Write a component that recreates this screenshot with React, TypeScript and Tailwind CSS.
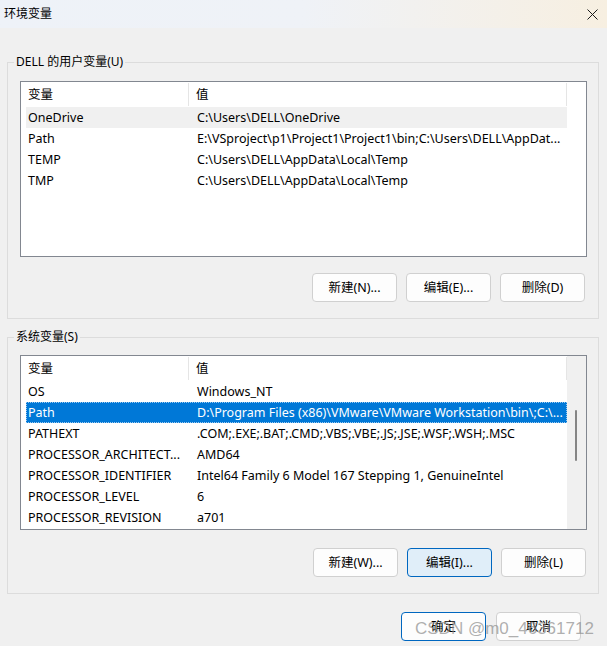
import React from "react";

const FONT = "font-['Noto_Sans','Noto_Sans_CJK_SC',sans-serif]";

type Row = { name: string; value: string };

const userVars: Row[] = [
  { name: "OneDrive", value: "C:\\Users\\DELL\\OneDrive" },
  { name: "Path", value: "E:\\VSproject\\p1\\Project1\\Project1\\bin;C:\\Users\\DELL\\AppDat..." },
  { name: "TEMP", value: "C:\\Users\\DELL\\AppData\\Local\\Temp" },
  { name: "TMP", value: "C:\\Users\\DELL\\AppData\\Local\\Temp" },
];

const sysVars: Row[] = [
  { name: "OS", value: "Windows_NT" },
  { name: "Path", value: "D:\\Program Files (x86)\\VMware\\VMware Workstation\\bin\\;C:\\..." },
  { name: "PATHEXT", value: ".COM;.EXE;.BAT;.CMD;.VBS;.VBE;.JS;.JSE;.WSF;.WSH;.MSC" },
  { name: "PROCESSOR_ARCHITECT...", value: "AMD64" },
  { name: "PROCESSOR_IDENTIFIER", value: "Intel64 Family 6 Model 167 Stepping 1, GenuineIntel" },
  { name: "PROCESSOR_LEVEL", value: "6" },
  { name: "PROCESSOR_REVISION", value: "a701" },
];

function Header() {
  return (
    <div className="flex h-[25px] shrink-0 bg-white">
      <div className="my-[1px] flex w-[168px] items-center border-r border-[#e5e5e5] pl-[7px]">变量</div>
      <div className="my-[1px] flex w-[378px] items-center border-r border-[#e5e5e5] pl-[7px]">值</div>
    </div>
  );
}

function ListRow({ row, variant }: { row: Row; variant?: "hover" | "selected" }) {
  const bg =
    variant === "hover"
      ? "bg-[#f0f0f0] text-black"
      : variant === "selected"
      ? "bg-[#0078d7] text-white outline outline-1 outline-dotted outline-[#9ccaf0] -outline-offset-1"
      : "text-black";
  return (
    <div className={`ml-[5px] flex h-[21px] w-[541px] items-center whitespace-nowrap ${bg}`}>
      <div className="w-[163px] overflow-hidden pl-[2px]">{row.name}</div>
      <div className="w-[378px] overflow-hidden pl-[8px]">{row.value}</div>
    </div>
  );
}

function Button({ label, variant }: { label: string; variant?: "focus" | "default" }) {
  const cls =
    variant === "focus"
      ? "bg-[#e0eef9] border-[#0067c0]"
      : variant === "default"
      ? "bg-[#fdfdfd] border-[#0067c0]"
      : "bg-[#fdfdfd] border-[#d0d0d0]";
  return (
    <div className={`flex h-[29px] w-[85px] items-center justify-center rounded-[4px] border ${cls} text-black`}>
      {label}
    </div>
  );
}

export default function App() {
  return (
    <div className={`relative flex h-[646px] w-[607px] flex-col overflow-hidden bg-[#f0f0f0] text-[12.5px] leading-[16px] text-black ${FONT}`}>
      {/* title bar */}
      <div className="flex h-[28px] shrink-0 items-center justify-between bg-gradient-to-r from-[#eef2f8] via-[#eff2f7] to-[#f7efe1] pl-[4px] pr-[9px]">
        <span className="text-[12px] text-black">环境变量</span>
        <svg width="11" height="11" viewBox="0 0 11 11" className="mt-[1px]">
          <path d="M0.5 0.5 L10.5 10.5 M10.5 0.5 L0.5 10.5" stroke="#1a1a1a" strokeWidth="1" />
        </svg>
      </div>

      {/* user variables */}
      <fieldset className="ml-[7px] mt-[26px] w-[592px] border border-[#dcdcdc] px-[6px] pb-[16px]">
        <legend className="px-[2px] text-[12px] leading-[16px]">DELL 的用户变量(U)</legend>
        <div className="ml-[6px] mt-[11px] flex h-[176px] w-[567px] flex-col border border-[#828790] bg-white">
          <Header />
          <ListRow row={userVars[0]} variant="hover" />
          {userVars.slice(1).map((r) => (
            <ListRow key={r.name} row={r} />
          ))}
        </div>
        <div className="mt-[16px] flex justify-end gap-[9px] pr-[7px]">
          <Button label="新建(N)..." />
          <Button label="编辑(E)..." />
          <Button label="删除(D)" />
        </div>
      </fieldset>

      {/* system variables */}
      <fieldset className="ml-[7px] mt-[10px] w-[592px] border border-[#dcdcdc] px-[6px] pb-[16px]">
        <legend className="px-[2px] text-[12px] leading-[16px]">系统变量(S)</legend>
        <div className="ml-[6px] mt-[10px] flex h-[175px] w-[567px] border border-[#828790] bg-white">
          <div className="flex w-[546px] flex-col">
            <Header />
            {sysVars.map((r) => (
              <ListRow key={r.name} row={r} variant={r.name === "Path" ? "selected" : undefined} />
            ))}
          </div>
          <div className="relative w-[19px] bg-[#f0f0f0]">
            <div className="absolute left-[8px] top-[54px] h-[51px] w-[2px] rounded-full bg-[#858585]" />
          </div>
        </div>
        <div className="mt-[18px] flex justify-end gap-[9px] pr-[6px]">
          <Button label="新建(W)..." />
          <Button label="编辑(I)..." variant="focus" />
          <Button label="删除(L)" />
        </div>
      </fieldset>

      {/* dialog buttons */}
      <div className="mt-[18px] flex justify-end gap-[10px] pr-[26px]">
        <Button label="确定" variant="default" />
        <Button label="取消" />
      </div>

      {/* watermark */}
      <div className="pointer-events-none absolute left-[415px] top-[619px] font-['Liberation_Sans',sans-serif] text-[17px] leading-[20px] text-[#8c8c8c]/70">
        CSDN @m0_46361712
      </div>
    </div>
  );
}
